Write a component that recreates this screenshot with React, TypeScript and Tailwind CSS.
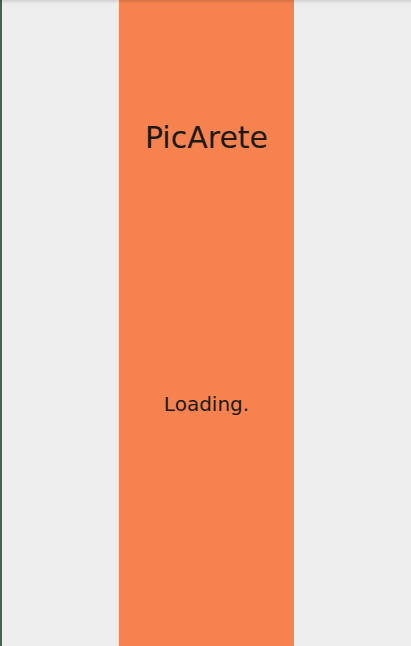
import React from "react";

export default function App() {
  return (
    <div className="relative flex h-[646px] w-full overflow-hidden bg-[#eeeeee] font-['DejaVu_Sans',sans-serif]">
      {/* thin edge on the left */}
      <div className="w-[2px] shrink-0 bg-[#41674a]" />
      <div className="flex flex-1 justify-center">
        <div className="flex w-[175px] flex-col items-center bg-[#f6834f] text-[#1b1a19]">
          <div className="mt-[119px] text-[30px] leading-[38px]">PicArete</div>
          <div className="mt-[234px] text-[20px] leading-[26px]">Loading.</div>
        </div>
      </div>
      {/* top shadow */}
      <div className="pointer-events-none absolute left-0 right-0 top-0 h-[4px] bg-gradient-to-b from-[rgba(0,0,0,0.12)] to-transparent" />
    </div>
  );
}
